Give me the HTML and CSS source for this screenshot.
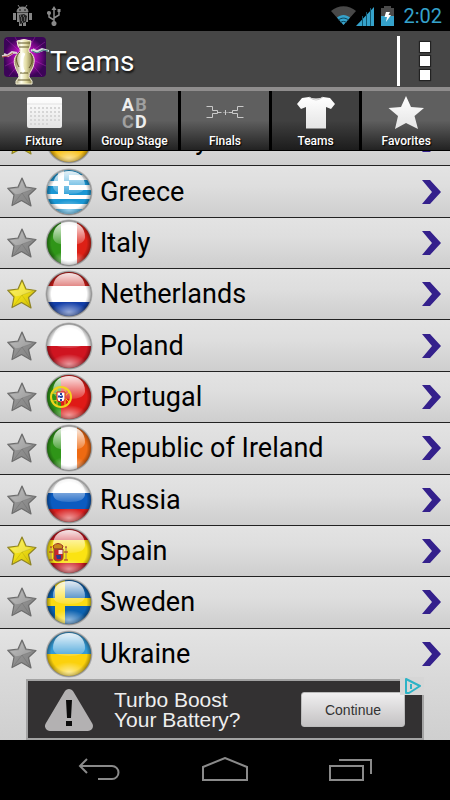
FILE: index.html
```
<!DOCTYPE html>
<html lang="en">
<head>
  <meta charset="UTF-8" />
  <meta name="viewport" content="width=device-width, initial-scale=1.0" />
  <title>Teams</title>
  <link rel="stylesheet" href="styles.css">
</head>

<body>
  <!-- shared shapes -->
  <svg class="defs" width="0" height="0" aria-hidden="true">
    <defs>
      <clipPath id="round"><circle cx="24" cy="24" r="22" /></clipPath>
      <linearGradient id="shine" x1="0" y1="0" x2="0" y2="1">
        <stop offset="0" stop-color="#fff" stop-opacity="0.9" />
        <stop offset="1" stop-color="#fff" stop-opacity="0.15" />
      </linearGradient>
      <radialGradient id="glow" cx="0.5" cy="0.5" r="0.5">
        <stop offset="0" stop-color="#fff" stop-opacity="0.55" />
        <stop offset="1" stop-color="#fff" stop-opacity="0" />
      </radialGradient>
      <radialGradient id="rim" cx="0.5" cy="0.5" r="0.5">
        <stop offset="0.8" stop-color="#000" stop-opacity="0" />
        <stop offset="1" stop-color="#000" stop-opacity="0.35" />
      </radialGradient>
      <radialGradient id="shade" cx="0.5" cy="0.5" r="0.5">
        <stop offset="0.88" stop-color="#000" stop-opacity="0.6" />
        <stop offset="1" stop-color="#000" stop-opacity="0" />
      </radialGradient>
      <linearGradient id="grey" x1="0" y1="0" x2="1" y2="1">
        <stop offset="0" stop-color="#b4b4b4" />
        <stop offset="0.5" stop-color="#8f8f8f" />
        <stop offset="1" stop-color="#808080" />
      </linearGradient>
      <linearGradient id="yellow" x1="0" y1="0" x2="1" y2="1">
        <stop offset="0" stop-color="#fbf04a" />
        <stop offset="0.5" stop-color="#eedd14" />
        <stop offset="1" stop-color="#c9b608" />
      </linearGradient>
      <linearGradient id="paper" x1="0" y1="0" x2="0" y2="1">
        <stop offset="0" stop-color="#fff" />
        <stop offset="1" stop-color="#e4e4e4" />
      </linearGradient>
      <radialGradient id="purple">
        <stop offset="0" stop-color="#ff5cf4" />
        <stop offset="0.5" stop-color="#a80eae" />
        <stop offset="1" stop-color="#3c0458" />
      </radialGradient>
      <linearGradient id="gold">
        <stop offset="0" stop-color="#8f8550" />
        <stop offset="0.35" stop-color="#fffff0" />
        <stop offset="0.6" stop-color="#e2dca4" />
        <stop offset="1" stop-color="#6d6233" />
      </linearGradient>
      <symbol id="gloss" viewBox="0 0 48 48">
        <circle cx="24" cy="24" r="22" fill="url(#rim)" />
        <ellipse cx="24" cy="42" rx="18" ry="10" fill="url(#glow)" clip-path="url(#round)" />
        <path d="M8 18C8 8 15 3 24 3s16 5 16 15c0 5-5 8-16 8S8 23 8 18z" fill="url(#shine)" />
      </symbol>
      <symbol id="star" viewBox="0 0 30 30">
        <path d="M15 1l4 9 10 1.500-7.500 7 2.500 10.500-9.500-5.500L5 28.500 7 18 .8 11.300 11 10z" stroke-width="1.200" stroke-linejoin="round" />
        <path d="M15 3.500l-3.200 7.800-8.500 1 5.500 5c5-.4 10-2.500 17-5.300l-7.700-1z" fill="#fff" fill-opacity="0.22" stroke="none" />
        <path d="M15 16L7 26.500M15 16l11-4M15 16l7.500 11" fill="none" stroke="#000" stroke-opacity="0.1" />
      </symbol>
      <symbol id="chevron" viewBox="0 0 20 24">
        <path d="M0 0h8l11 12L8 24H0l10-12z" fill="#34208c" />
      </symbol>
    </defs>
  </svg>

  <!-- status bar -->
  <div class="status">
    <svg width="19" height="21" viewBox="0 0 19 21">
      <path d="M4 7c0-3 2-5 5.500-5S15 4 15 7zM5 0l2 3M14 0l-2 3" fill="#858585" stroke="#858585" />
      <circle cx="7" cy="5" r="0.800" /><circle cx="12" cy="5" r="0.800" />
      <path d="M0 8h3v7H0zM16 8h3v7h-3zM4 8h11v9h-2v4h-3v-4H9v4H6v-4H4z" fill="#858585" />
      <path d="M6 10l5-1 3 2-1 6-3 1-3 1z" fill="#222" />
      <path d="M7 11h1m2 0h1m-3 2h1m2 0h1m-4 2h1m2 0h1m-3 2h1" stroke="#999" />
    </svg>
    <svg class="usb" width="14" height="20" viewBox="0 0 14 20" fill="none" stroke="#8b8b8b" stroke-width="1.500">
      <path d="M7 2v15M7 14L2 11V7M7 12l5-3V5" />
      <path d="M7 0L4.500 4h5zM10.500 3h3v3h-3z" fill="#8b8b8b" stroke="none" />
      <circle cx="2" cy="7" r="1.300" fill="#8b8b8b" /><circle cx="7" cy="17.500" r="1.800" fill="#8b8b8b" />
    </svg>
    <svg class="wifi" width="25" height="19" viewBox="0 0 25 19">
      <path d="M0 5C7-1.500 18-1.500 25 5L12.500 19z" fill="#484848" />
      <path d="M6 11.500c4-3.500 9-3.500 13 0L12.500 19z" fill="#35a2cb" />
      <path d="M7.500 14c3-2.500 7-2.500 10 0M9.500 16.500c2-1.500 4-1.500 6 0" fill="none" stroke="#0b4257" />
    </svg>
    <svg width="18" height="20" viewBox="0 0 18 20">
      <path d="M0 20L18 1v19z" fill="#35a2cb" />
      <path d="M6.500 10v10M10.500 6v14M14.500 2v18" stroke="#10556e" />
    </svg>
    <svg class="battery" width="13" height="20" viewBox="0 0 13 20">
      <path d="M3 0h7v2h3v18H0V2h3z" fill="#4a4a4a" />
      <path d="M0 10h13v10H0z" fill="#35a2cb" />
      <path d="M5 6h4L7.500 9H10l-5 7 1-5H3.500z" fill="#fff" />
    </svg>
    <span class="clock">2:02</span>
  </div>

  <!-- title bar -->
  <header class="header">
    <svg class="logo" width="48" height="50" viewBox="0 0 48 50">
      <rect x="3" y="1" width="42" height="40" rx="4" fill="url(#purple)" />
      <path d="M24 20L5 3M24 20L14 1M24 20L34 1M24 20L44 6M24 20l21 10M24 20L4 30M24 20L8 40M24 20l17 20" stroke="#e13be6" stroke-opacity="0.3" />
      <path d="M1 20l6-1 4-3 5 1M3 18l4 2 5-3" fill="none" stroke="#d9d3d0" stroke-width="2" />
      <path d="M1 21l6-1 5-3" fill="none" stroke="#b14b47" />
      <path d="M30 14l5 2 6-3 7 2M32 13l5 3 5-2" fill="none" stroke="#d5dddb" stroke-width="2" />
      <path d="M31 15l5 2 6-3 5 1" fill="none" stroke="#3c7778" />
      <path d="M16 5q7-3 14 0l-1 6q-2 2-1 5c6 3 6 9 4 15-2 5-4 6-4 10l3 4v3H15v-3l3-4c0-4-3-6-4-11-2-6 0-11 5-14 1-3-1-4-2-6z" fill="url(#gold)" stroke="#f4f1d6" />
      <path d="M17 7h12M18 11h10M19 16c-5 4-4 10-1 15M29 17c4 5 2 11-1 15M19 37h8M17 44h12" fill="none" stroke="#615629" />
      <path d="M23 17c-3 5-3 15 0 19" fill="none" stroke="#fff" stroke-width="3" />
    </svg>
    <h1>Teams</h1>
    <button class="menu" aria-label="More options">
      <span></span><span></span><span></span>
    </button>
  </header>

  <!-- tabs -->
  <nav class="tabs">
    <a href="#" class="tab">
      <svg width="40" height="36" viewBox="0 0 40 36">
        <rect x="3" y="2" width="35" height="31" rx="2" fill="url(#paper)" />
        <path d="M3 9h35" stroke="#e2e2e2" />
        <path d="M6 13h30M6 17h30M6 21h30M6 25h30M6 29h20" stroke="#d6d6d6" stroke-width="2" stroke-dasharray="2 2" />
      </svg>
      <span>Fixture</span>
    </a>
    <a href="#" class="tab">
      <span class="letters" aria-hidden="true">
        <b>A</b><b class="dim">B</b>
        <b class="dim">C</b><b>D</b>
      </span>
      <span>Group Stage</span>
    </a>
    <a href="#" class="tab">
      <svg width="40" height="36" viewBox="0 0 40 36" fill="none" stroke="#c9c9c9">
        <path d="M1.500 11.500h6v4h5v3h-5v4h-6M12.500 17.500h4M38.500 11.500h-6v4h-5v3h5v4h6M27.500 17.500h-4" />
        <path d="M18.500 17.500h1M21.500 17.500h1M20.500 15v5" />
      </svg>
      <span>Finals</span>
    </a>
    <a href="#" class="tab active">
      <svg width="40" height="36" viewBox="0 0 40 36">
        <path d="M13 2q7 3 14 0l7 1 5 6-4 5-5-2v21.500H10V12l-5 2-4-5 5-6z" fill="url(#paper)" />
        <path d="M13 2q7 6 14 0" fill="none" stroke="#cfcfcf" />
      </svg>
      <span>Teams</span>
    </a>
    <a href="#" class="tab">
      <svg width="40" height="36" viewBox="0 0 40 36">
        <path d="M20 1l5 11 13 1-9.500 8L32 34l-12-6-11 6 3-13-9.500-8 12.500-1z" fill="url(#paper)" />
      </svg>
      <span>Favorites</span>
    </a>
  </nav>

  <!-- team list -->
  <main class="content">
    <ul class="teams">
      <li class="team">
        <button class="fav on" aria-label="Favorite Germany"><svg width="30" height="30"><use href="#star" /></svg></button>
        <svg class="flag" width="48" height="48" viewBox="0 0 48 48">
          <circle cx="24" cy="24" r="24" fill="url(#shade)" />
          <g clip-path="url(#round)"><path d="M0 0h48v17H0z" fill="#222" /><path d="M0 17h48v15H0z" fill="#d81e1e" /><path d="M0 32h48v16H0z" fill="#f7bd0c" /></g>
          <use href="#gloss" />
        </svg>
        <a href="#" class="name">Germany<svg width="20" height="24"><use href="#chevron" /></svg></a>
      </li>
      <li class="team">
        <button class="fav" aria-label="Favorite Greece"><svg width="30" height="30"><use href="#star" /></svg></button>
        <svg class="flag" width="48" height="48" viewBox="0 0 48 48">
          <circle cx="24" cy="24" r="24" fill="url(#shade)" />
          <g clip-path="url(#round)"><path d="M0 0h48v48H0z" fill="#fff" /><path d="M0 2h24v24H0zM24 2h24v5H24zM24 12h24v5H24zM24 22h24v5H24zM0 31h48v5H0zM0 41h48v7H0z" fill="#1b97d4" /><path d="M13 2h6v25h-6zM0 13h24v5H0z" fill="#fff" /></g>
          <use href="#gloss" />
        </svg>
        <a href="#" class="name">Greece<svg width="20" height="24"><use href="#chevron" /></svg></a>
      </li>
      <li class="team">
        <button class="fav" aria-label="Favorite Italy"><svg width="30" height="30"><use href="#star" /></svg></button>
        <svg class="flag" width="48" height="48" viewBox="0 0 48 48">
          <circle cx="24" cy="24" r="24" fill="url(#shade)" />
          <g clip-path="url(#round)"><path d="M0 0h16v48H0z" fill="#2f9518" /><path d="M16 0h16v48H16z" fill="#fff" /><path d="M32 0h16v48H32z" fill="#dd2016" /></g>
          <use href="#gloss" />
        </svg>
        <a href="#" class="name">Italy<svg width="20" height="24"><use href="#chevron" /></svg></a>
      </li>
      <li class="team">
        <button class="fav on" aria-label="Favorite Netherlands"><svg width="30" height="30"><use href="#star" /></svg></button>
        <svg class="flag" width="48" height="48" viewBox="0 0 48 48">
          <circle cx="24" cy="24" r="24" fill="url(#shade)" />
          <g clip-path="url(#round)"><path d="M0 0h48v16H0z" fill="#c81c18" /><path d="M0 16h48v16H0z" fill="#fff" /><path d="M0 32h48v16H0z" fill="#143fa8" /></g>
          <use href="#gloss" />
        </svg>
        <a href="#" class="name">Netherlands<svg width="20" height="24"><use href="#chevron" /></svg></a>
      </li>
      <li class="team">
        <button class="fav" aria-label="Favorite Poland"><svg width="30" height="30"><use href="#star" /></svg></button>
        <svg class="flag" width="48" height="48" viewBox="0 0 48 48">
          <circle cx="24" cy="24" r="24" fill="url(#shade)" />
          <g clip-path="url(#round)"><path d="M0 0h48v24H0z" fill="#fff" /><path d="M0 24h48v24H0z" fill="#cf1420" /></g>
          <use href="#gloss" />
        </svg>
        <a href="#" class="name">Poland<svg width="20" height="24"><use href="#chevron" /></svg></a>
      </li>
      <li class="team">
        <button class="fav" aria-label="Favorite Portugal"><svg width="30" height="30"><use href="#star" /></svg></button>
        <svg class="flag" width="48" height="48" viewBox="0 0 48 48">
          <circle cx="24" cy="24" r="24" fill="url(#shade)" />
          <g clip-path="url(#round)"><path d="M0 0h16v48H0z" fill="#2f9518" /><path d="M16 0h32v48H16z" fill="#df1a16" /></g>
          <use href="#gloss" />
          <circle cx="16" cy="24" r="10" fill="none" stroke="#f2d31b" stroke-width="2" />
          <path d="M7 20c6 0 12 3 17 9M7 28c6 0 12-3 17-9M12 15v18M20 15v18" fill="none" stroke="#f2d31b" />
          <path d="M12 19h8v7q0 3-4 3t-4-3z" fill="#fff" stroke="#d4181c" />
          <path d="M16 20v8M13 23.500h6" stroke="#2846a5" stroke-width="2" stroke-dasharray="2 1" />
        </svg>
        <a href="#" class="name">Portugal<svg width="20" height="24"><use href="#chevron" /></svg></a>
      </li>
      <li class="team">
        <button class="fav" aria-label="Favorite Republic of Ireland"><svg width="30" height="30"><use href="#star" /></svg></button>
        <svg class="flag" width="48" height="48" viewBox="0 0 48 48">
          <circle cx="24" cy="24" r="24" fill="url(#shade)" />
          <g clip-path="url(#round)"><path d="M0 0h16v48H0z" fill="#2f9518" /><path d="M16 0h16v48H16z" fill="#fff" /><path d="M32 0h16v48H32z" fill="#ee6a12" /></g>
          <use href="#gloss" />
        </svg>
        <a href="#" class="name">Republic of Ireland<svg width="20" height="24"><use href="#chevron" /></svg></a>
      </li>
      <li class="team">
        <button class="fav" aria-label="Favorite Russia"><svg width="30" height="30"><use href="#star" /></svg></button>
        <svg class="flag" width="48" height="48" viewBox="0 0 48 48">
          <circle cx="24" cy="24" r="24" fill="url(#shade)" />
          <g clip-path="url(#round)"><path d="M0 0h48v17H0z" fill="#fff" /><path d="M0 17h48v16H0z" fill="#0b5bc0" /><path d="M0 33h48v15H0z" fill="#d81e1e" /></g>
          <use href="#gloss" />
        </svg>
        <a href="#" class="name">Russia<svg width="20" height="24"><use href="#chevron" /></svg></a>
      </li>
      <li class="team">
        <button class="fav on" aria-label="Favorite Spain"><svg width="30" height="30"><use href="#star" /></svg></button>
        <svg class="flag" width="48" height="48" viewBox="0 0 48 48">
          <circle cx="24" cy="24" r="24" fill="url(#shade)" />
          <g clip-path="url(#round)"><path d="M0 0h48v13H0z" fill="#c8141e" /><path d="M0 13h48v23H0z" fill="#fbe312" /><path d="M0 36h48v12H0z" fill="#c8141e" /></g>
          <use href="#gloss" />
          <path d="M8 19q5-5 10 0l-1 3H9z" fill="#c88a1c" stroke="#9c2d22" />
          <path d="M9 22h9v8q0 4-5 4t-4-4z" fill="#c7242c" stroke="#84592c" />
          <path d="M13.500 23h4v4h-4z" fill="#f6dde0" /><path d="M11 28h5v4h-4z" fill="#2c3b8d" />
          <path d="M6 20v13M21 20v13" stroke="#a8836c" />
          <path d="M4 25h4M19 25h4M4 33h4M19 33h4M5 20h2M20 20h2" stroke="#a2262b" />
        </svg>
        <a href="#" class="name">Spain<svg width="20" height="24"><use href="#chevron" /></svg></a>
      </li>
      <li class="team">
        <button class="fav" aria-label="Favorite Sweden"><svg width="30" height="30"><use href="#star" /></svg></button>
        <svg class="flag" width="48" height="48" viewBox="0 0 48 48">
          <circle cx="24" cy="24" r="24" fill="url(#shade)" />
          <g clip-path="url(#round)"><path d="M0 0h48v48H0z" fill="#0c62b0" /><path d="M10 0h10v48H10zM0 20h48v8H0z" fill="#fbdb12" /></g>
          <use href="#gloss" />
        </svg>
        <a href="#" class="name">Sweden<svg width="20" height="24"><use href="#chevron" /></svg></a>
      </li>
      <li class="team">
        <button class="fav" aria-label="Favorite Ukraine"><svg width="30" height="30"><use href="#star" /></svg></button>
        <svg class="flag" width="48" height="48" viewBox="0 0 48 48">
          <circle cx="24" cy="24" r="24" fill="url(#shade)" />
          <g clip-path="url(#round)"><path d="M0 0h48v24H0z" fill="#349bd6" /><path d="M0 24h48v24H0z" fill="#fbd10c" /></g>
          <use href="#gloss" />
        </svg>
        <a href="#" class="name">Ukraine<svg width="20" height="24"><use href="#chevron" /></svg></a>
      </li>
    </ul>
  </main>

  <!-- ad banner -->
  <aside class="ad-area">
    <div class="ad">
      <svg width="50" height="44" viewBox="0 0 50 44">
        <path d="M25 6L6 38h38z" fill="#b3b1b2" stroke="#b3b1b2" stroke-width="10" stroke-linejoin="round" />
        <path d="M22 12h6l-1 18h-4zM22 33h6v5h-6z" fill="#0c0c0c" />
      </svg>
      <p>Turbo Boost<br>Your Battery?</p>
      <button class="continue">Continue</button>
      <a href="#" class="choices" aria-label="Ad choices">
        <svg width="18" height="18" viewBox="0 0 18 18" fill="none" stroke="#2cb3c6" stroke-width="2">
          <path d="M2 2l14 7-11 7H2z" stroke-linejoin="round" /><path d="M7 7v5M7 4v1" />
        </svg>
      </a>
    </div>
  </aside>

  <!-- system buttons -->
  <footer class="system">
    <button aria-label="Back">
      <svg width="46" height="26" viewBox="0 0 46 26"><path d="M10 2L3 9l7 7M3 9h32a6 6 0 0 1 0 13H21" /></svg>
    </button>
    <button aria-label="Home">
      <svg width="46" height="26" viewBox="0 0 46 26"><path d="M1 23V10L23 1l22 9v13z" /></svg>
    </button>
    <button aria-label="Recent apps">
      <svg width="46" height="26" viewBox="0 0 46 26"><path d="M3 9h33v14H3zM12 3h32v14" /></svg>
    </button>
  </footer>
</body>

</html>
```

FILE: styles.css
```
* {
  box-sizing: border-box;
  margin: 0;
  padding: 0;
}

body {
  display: flex;
  flex-direction: column;
  min-height: 100vh;
  background: #000;
  font-family: Roboto, sans-serif;
  color: #fff;
}

button {
  background: none;
  border: none;
  cursor: pointer;
}

a {
  color: inherit;
  text-decoration: none;
}

svg {
  display: block;
  flex: none;
}

.defs {
  position: absolute;
}

/* status bar */
.status {
  display: flex;
  align-items: center;
  height: 31px;
  padding: 0 8px 0 13px;
}

.usb {
  margin-left: 15px;
}

.wifi {
  margin-left: auto;
}

.battery {
  margin: 0 9px 0 7px;
}

.clock {
  font-size: 20px;
  color: #35a2cb;
}

/* title bar */
.header {
  display: flex;
  align-items: center;
  height: 60px;
  padding: 4px 0 0 1px;
  background: #464646;
  border-bottom: 4px solid #8f8d8d;
}

.header h1 {
  flex: 1;
  padding-left: 1px;
  font-size: 28px;
  font-weight: 400;
  text-shadow: 1px 2px 2px #111;
}

.menu {
  display: flex;
  flex-direction: column;
  align-items: center;
  justify-content: center;
  gap: 4px;
  width: 53px;
  height: 50px;
  border-left: 3px solid #fff;
}

.menu span {
  width: 10px;
  height: 10px;
  background: #fff;
  box-shadow: 0 0 1px 1px #222;
}

/* tabs */
.tabs {
  position: relative;
  z-index: 1;
  display: flex;
  gap: 3px;
  background: #000;
  border-bottom: 1px solid #000;
}

.tab {
  flex: 1 1 0;
  display: flex;
  flex-direction: column;
  align-items: center;
  gap: 2px;
  height: 59px;
  padding-top: 4px;
  background: linear-gradient(#5f5f5f 50%, #222);
  font-size: 12px;
  font-weight: 500;
  line-height: 16px;
  white-space: nowrap;
  text-shadow: 1px 1px 1px #000;
}

.tab.active {
  background: linear-gradient(#404040 50%, #1c1c1c);
}

.letters {
  display: grid;
  grid-template-columns: 13px 13px;
  grid-template-rows: 17px 17px;
  height: 36px;
  padding-top: 1px;
  font-size: 18px;
  line-height: 17px;
  text-align: center;
  text-shadow: none;
  color: #eee;
}

.letters .dim {
  color: #a0a0a0;
}

/* team list */
.content {
  flex: 1;
  display: flex;
  overflow: hidden;
  background: #d8d8d8;
}

/* scrolled so that the first row is partly under the tabs */
.teams {
  flex: 1;
  display: flex;
  flex-direction: column;
  margin-top: -37px;
  list-style: none;
}

.team {
  flex: 1;
  display: flex;
  align-items: center;
  padding: 0 8px 0 7px;
  border-top: 1px solid #222;
  background: linear-gradient(#e3e3e3, #dedede 40%, #cecece);
  color: #000;
}

.team:last-child {
  background: linear-gradient(#e3e3e3, #d9d9d9);
}

.fav {
  margin-right: 8px;
  fill: url(#grey);
  stroke: #6c6c6c;
}

.fav.on {
  fill: url(#yellow);
  stroke: #8f8427;
}

.name {
  flex: 1;
  display: flex;
  align-items: center;
  justify-content: space-between;
  margin-left: 7px;
  font-size: 27px;
  line-height: 32px;
}

/* ad banner */
.ad-area {
  padding: 0 26px;
  background: linear-gradient(#d9d9d9, #cfcfcf);
}

.ad {
  position: relative;
  display: flex;
  align-items: center;
  height: 61px;
  padding: 0 17px 0 16px;
  background: #333132;
  border: 2px solid #a3a3a3;
  font-family: "Liberation Sans", sans-serif;
}

.ad p {
  flex: 1;
  margin-left: 20px;
  font-size: 21px;
  line-height: 20px;
  color: #eee;
}

.continue {
  width: 104px;
  height: 35px;
  border: 1px solid #bbb;
  border-radius: 3px;
  background: linear-gradient(#f0eff0, #c4c2c3);
  font-family: "Liberation Sans", sans-serif;
  font-size: 14px;
  color: #333;
}

.choices {
  position: absolute;
  top: -4px;
  right: -2px;
  padding: 0 2px 0 4px;
  background: #d6d6d6;
}

/* system buttons */
.system {
  display: flex;
  height: 60px;
  padding: 0 37px;
}

.system button {
  flex: 1;
  display: flex;
  align-items: center;
  justify-content: center;
}

.system svg {
  fill: none;
  stroke: #8a8a8a;
  stroke-width: 2;
}
```
